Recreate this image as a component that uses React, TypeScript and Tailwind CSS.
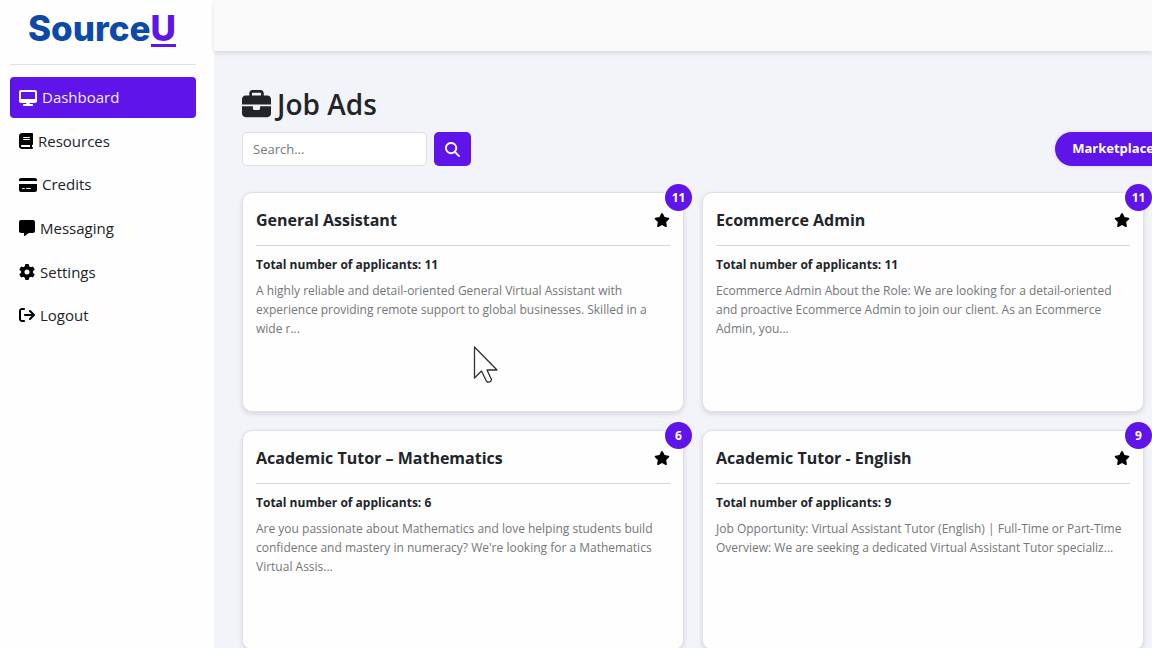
import type { ComponentType } from "react";
import {
  FaDesktop,
  FaBook,
  FaCreditCard,
  FaMessage,
  FaGear,
  FaArrowRightFromBracket,
  FaBriefcase,
  FaMagnifyingGlass,
  FaStar,
} from "react-icons/fa6";

type NavItem = {
  label: string;
  icon: ComponentType<{ className?: string }>;
  iconClass: string;
  active?: boolean;
};

const navItems: NavItem[] = [
  { label: "Dashboard", icon: FaDesktop, iconClass: "h-[18px] w-[18px]", active: true },
  { label: "Resources", icon: FaBook, iconClass: "h-4 w-[14px]" },
  { label: "Credits", icon: FaCreditCard, iconClass: "h-[18px] w-[18px]" },
  { label: "Messaging", icon: FaMessage, iconClass: "h-4 w-4" },
  { label: "Settings", icon: FaGear, iconClass: "h-4 w-4" },
  { label: "Logout", icon: FaArrowRightFromBracket, iconClass: "h-4 w-4" },
];

type Job = { title: string; applicants: number; lines: string[] };

const jobs: Job[] = [
  {
    title: "General Assistant",
    applicants: 11,
    lines: [
      "A highly reliable and detail-oriented General Virtual Assistant with",
      "experience providing remote support to global businesses. Skilled in a",
      "wide r...",
    ],
  },
  {
    title: "Ecommerce Admin",
    applicants: 11,
    lines: [
      "Ecommerce Admin About the Role: We are looking for a detail-oriented",
      "and proactive Ecommerce Admin to join our client. As an Ecommerce",
      "Admin, you...",
    ],
  },
  {
    title: "Academic Tutor – Mathematics",
    applicants: 6,
    lines: [
      "Are you passionate about Mathematics and love helping students build",
      "confidence and mastery in numeracy? We're looking for a Mathematics",
      "Virtual Assis...",
    ],
  },
  {
    title: "Academic Tutor - English",
    applicants: 9,
    lines: [
      "Job Opportunity: Virtual Assistant Tutor (English) | Full-Time or Part-Time",
      "Overview: We are seeking a dedicated Virtual Assistant Tutor specializ...",
    ],
  },
];

function Sidebar() {
  return (
    <aside className="w-[214px] shrink-0 bg-[#fefefe] pr-[18px] pl-[10px]">
      <a
        href="#home"
        className="flex h-[65px] items-start border-b border-[#dfe0e4] pt-3 pl-[18px] font-['Inter',sans-serif] text-[35px] leading-8 font-extrabold text-[#0b4aa8]"
      >
        <span>Source</span>
        <span className="border-b-3 border-[#5f14ea] text-[#5f14ea]">U</span>
      </a>
      <nav className="mt-3 flex h-[259px] flex-col justify-between">
        {navItems.map(({ label, icon: Icon, iconClass, active }) => (
          <a
            key={label}
            href={`#${label.toLowerCase()}`}
            className={`flex h-[41px] items-center gap-[5px] rounded-sm px-[9px] text-[15px] ${
              active ? "bg-[#5f14ea] text-[#f4effe]" : "text-[#202326]"
            }`}
          >
            <span className={active ? "text-white" : "text-black"}>
              <Icon className={iconClass} />
            </span>
            {label}
          </a>
        ))}
      </nav>
    </aside>
  );
}

function JobCard({ job }: { job: Job }) {
  return (
    <article className="relative h-[220px] rounded-[10px] border border-[#e0e1e5] bg-[#fefefe] px-[13px] pt-[11px] shadow-[0_2px_5px_rgba(0,0,0,0.12)]">
      <span className="absolute -top-[9px] -right-[9px] flex size-[27px] items-center justify-center rounded-full bg-[#5f14ea] text-xs font-bold text-white">
        {job.applicants}
      </span>
      <header className="flex h-[42px] items-start justify-between border-b border-[#d5d6d9]">
        <h2 className="text-base leading-8 font-bold text-[#212529]">{job.title}</h2>
        <button type="button" aria-label="Favourite" className="mt-2 text-base text-black">
          <FaStar />
        </button>
      </header>
      <p className="mt-[9px] text-xs leading-5 font-bold text-[#212529]">
        Total number of applicants: {job.applicants}
      </p>
      <p className="mt-[6px] text-xs leading-[19px] whitespace-nowrap text-[#747678]">
        {job.lines.map((line) => (
          <span key={line} className="block">
            {line}
          </span>
        ))}
      </p>
    </article>
  );
}

export default function App() {
  return (
    <div className="relative flex h-screen overflow-hidden bg-[#f3f4f9] font-['Open_Sans','Noto_Sans',sans-serif]">
      <Sidebar />
      <div className="min-w-0 flex-1">
        <div className="h-[51px] bg-[#f9f9fa] shadow-[0_2px_5px_rgba(0,0,0,0.12)]" />
        <main className="pt-[35px] pr-2 pl-7">
          <h1 className="flex items-center gap-[6px] text-[28px] leading-9 font-semibold text-[#212529]">
            <FaBriefcase className="text-[29px]" />
            Job Ads
          </h1>
          <div className="mt-[10px] flex items-center justify-between">
            <form className="flex gap-[7px]">
              <input
                type="text"
                aria-label="Search"
                placeholder="Search..."
                className="h-[34px] w-[185px] rounded-[5px] border border-[#dedfe3] bg-white px-[10px] text-[13px] placeholder:text-[#75787b]"
              />
              <button
                type="button"
                aria-label="Submit search"
                className="flex h-[34px] w-[37px] items-center justify-center rounded-[5px] bg-[#5f14ea] text-[15px] text-white"
              >
                <FaMagnifyingGlass />
              </button>
            </form>
            <button
              type="button"
              className="-mr-[27px] h-[34px] rounded-full bg-[#5f14ea] px-[17px] text-[13px] font-bold text-white shadow-[0_0_4px_rgba(0,0,0,0.12)]"
            >
              Marketplace
            </button>
          </div>
          <section className="mt-[26px] grid grid-cols-2 gap-[18px]">
            {jobs.map((job) => (
              <JobCard key={job.title} job={job} />
            ))}
          </section>
        </main>
      </div>
      <svg
        className="pointer-events-none absolute top-[345px] left-[473px] h-[39px] w-[26px]"
        viewBox="0 0 26 39"
        fill="#fff"
        stroke="#332f30"
        strokeWidth="1.3"
        strokeLinejoin="round"
      >
        <path d="M1.5 2v31l7-7 5 10.2q2 2 4.500-.2.8-1.500 0-2.500L14 25h10z" />
      </svg>
    </div>
  );
}
